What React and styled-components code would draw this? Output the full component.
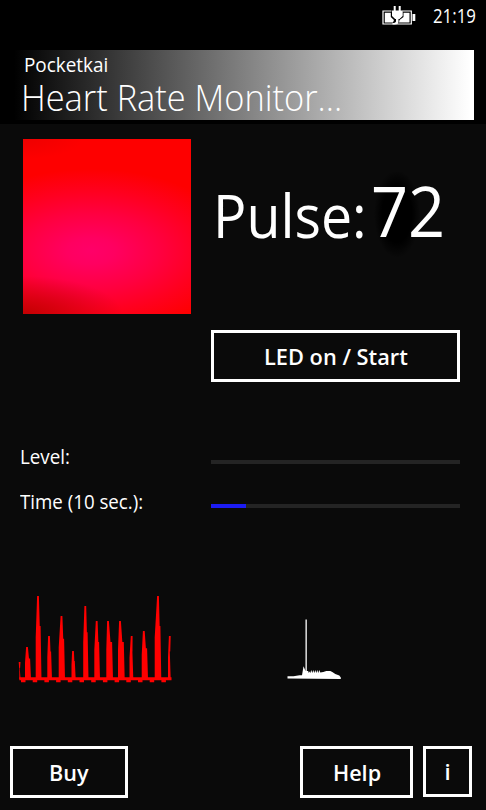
import styled, { createGlobalStyle } from "styled-components";

const GlobalStyle = createGlobalStyle`
  * {
    box-sizing: border-box;
  }

  body {
    margin: 0;
    background: #0a0a0a;
    color: #fff;
    font-family: "Open Sans", "Noto Sans", sans-serif;
  }
`;

const Phone = styled.div`
  display: flex;
  flex-direction: column;
  width: 486px;
  height: 810px;
  overflow: hidden;
  background: #0a0a0a;
`;

const Top = styled.header`
  height: 124px;
  background: #000;
`;

const StatusBar = styled.div`
  display: flex;
  justify-content: flex-end;
  height: 49.5px;
  padding: 0 10px 0 0;
`;

const BatteryIcon = styled.svg`
  width: 34px;
  height: 22px;
  margin: 5px 17px 0 0;
`;

/* text squeezed sideways to get the narrow phone lettering */
const Text = styled.span`
  display: block;
  width: ${({ $width }) => $width}px;
  font-size: ${({ $size }) => $size}px;
  font-weight: ${({ $weight }) => $weight || 400};
  line-height: ${({ $line }) => $line}px;
  white-space: nowrap;
  transform: scaleX(${({ $squeeze }) => $squeeze || 1});
  transform-origin: left;
`;

const Banner = styled.div`
  height: 70px;
  margin-right: 12px;
  padding-top: 1.5px;
  background: linear-gradient(to right, #000 14px, #808080 243px, #fff 470px);
`;

const BannerLine = styled.div`
  padding-left: ${({ $left }) => $left}px;
`;

const Reading = styled.section`
  display: flex;
  height: 190px;
  padding: 14.5px 0 0 23px;
`;

const Camera = styled.div`
  width: 167.5px;
  height: 175px;
  background:
    radial-gradient(ellipse 100px 38px at 0 100%, #b40000cc, #e0000000),
    radial-gradient(ellipse 60px 20px at 0 0, #d0000055, #e0000000),
    radial-gradient(
      ellipse 150px 82px at 68px 112px,
      #ff0068 0%,
      #ff0060 16%,
      #ff0040 46%,
      #ff0020 72%,
      #fe0000 100%
    );
`;

const Pulse = styled.div`
  display: flex;
  margin-left: 22.5px;
  padding-top: 32.5px;
`;

const PulseValue = styled.div`
  height: 88px;
  margin-top: 1px;
  padding-left: 1px;
  background: radial-gradient(ellipse 23px 44px at 27px 42px, #000 65%, #00000000);
`;

const StartRow = styled.div`
  display: flex;
  height: 128px;
  padding: 16px 0 0 211px;
`;

const Button = styled.button`
  display: flex;
  justify-content: center;
  width: ${({ $width }) => $width}px;
  height: ${({ $height }) => $height || 52}px;
  padding: 0;
  border: 3px solid #fff;
  background: transparent;
  color: #fff;
  font-family: inherit;
`;

const Meter = styled.div`
  display: grid;
  grid-template-columns: 191px 249px;
  height: 44.5px;
  padding-left: 20px;
`;

const Track = styled.div`
  height: 4px;
  margin-top: 17.5px;
  background: #242424;
`;

const Fill = styled.div`
  height: 100%;
  background: #1c1cf4;
`;

const Charts = styled.section`
  display: flex;
  align-items: flex-start;
  height: 215px;
  padding: 54px 0 0 10px;
`;

const Chart = styled.svg`
  width: ${({ $width }) => $width}px;
  height: 110px;
  margin-right: 85px;
`;

const Footer = styled.footer`
  display: flex;
  gap: 10px;
  padding: 0 14px 0 10px;
`;

const Spacer = styled.div`
  flex: 1;
`;

const meters = [
  { label: "Level:", width: 51, squeeze: 0.94, value: 0 },
  { label: "Time (10 sec.):", width: 125, squeeze: 0.935, value: 14 },
];

/* [left, peak, right, top] of every beat */
const beats = [
  [19.3, 19.6, 20.6, 662],
  [25, 27, 31, 647],
  [35.7, 38, 41.5, 596],
  [47.3, 49, 52, 636],
  [58.7, 61.5, 65, 616],
  [71.5, 73, 75.7, 651],
  [83.2, 85.3, 88.5, 606],
  [94.3, 96.7, 100, 621],
  [106.3, 108, 113, 621],
  [118, 120, 124.7, 621],
  [129.5, 131.7, 133.3, 636],
  [141.7, 143.8, 148, 631],
  [154.7, 158, 161.3, 596],
  [168, 169.8, 170.7, 636],
];

const beatPath = ([left, peak, right, top]) => {
  const base = 679;
  const shoulder = top + (base - top) * 0.36;
  return `M${left} ${base}V${(top + base) / 2}L${peak - 0.9} ${top}H${
    peak + 0.9
  }L${(peak + right) / 2} ${shoulder}H${right - 0.9}L${right} ${base}Z`;
};

function App() {
  return (
    <>
      <GlobalStyle />
      <Phone>
        <Top>
          <StatusBar>
            <BatteryIcon viewBox="0 0 34 22">
              <path
                d="M9.500 6H1v13h28.300V6H20.500"
                fill="none"
                stroke="#fff"
                strokeWidth="1.2"
              />
              <path
                d="M2.800 7.800h6v4.200l3.200 3-1 2.400H2.800zM21.500 7.800h6v9.600H17l.5-2.400 4-3zM30.500 9h2.800v7h-2.800z"
                fill="#fff"
              />
              <path
                d="M11.700 1h2v4.500h3V1h2v4.500h2v5.500l-3.200 3h-1v3q0 2.500-4 2.500h-2v-1.500q3.500 0 3.500-2V14h-.8L10 11V5.500h1.700z"
                fill="#fff"
              />
            </BatteryIcon>
            <Text $size={20.5} $line={30} $width={43} $squeeze={0.82}>
              21:19
            </Text>
          </StatusBar>
          <Banner>
            <BannerLine $left={24}>
              <Text $size={20} $line={27} $squeeze={0.945}>
                Pocketkai
              </Text>
            </BannerLine>
            <BannerLine $left={21}>
              <Text $size={36} $line={40} $weight={330} $squeeze={0.955}>
                Heart Rate Monitor...
              </Text>
            </BannerLine>
          </Banner>
        </Top>
        <Reading>
          <Camera />
          <Pulse>
            <Text $size={60} $line={88} $width={157} $squeeze={0.925}>
              Pulse:
            </Text>
            <PulseValue>
              <Text $size={69} $line={76} $width={80} $weight={430} $squeeze={0.94}>
                72
              </Text>
            </PulseValue>
          </Pulse>
        </Reading>
        <StartRow>
          <Button $width={249}>
            <Text $size={22} $line={46} $weight={600} $width={144} $squeeze={0.99}>
              LED on / Start
            </Text>
          </Button>
        </StartRow>
        {meters.map(({ label, width, squeeze, value }) => (
          <Meter key={label}>
            <Text $size={20} $line={30} $width={width} $squeeze={squeeze}>
              {label}
            </Text>
            <Track>
              <Fill style={{ width: `${value}%` }} />
            </Track>
          </Meter>
        ))}
        <Charts>
          <Chart $width={180} viewBox="10 585 180 110">
            {beats.map((beat) => (
              <path key={beat[0]} d={beatPath(beat)} fill="#f00" />
            ))}
            <path d="M19.300 678.800H171.500" stroke="#f00" strokeWidth="3" />
            <path
              d="M21 681H171"
              stroke="#f00"
              strokeWidth="2.500"
              strokeDasharray="4.500 7.200"
            />
          </Chart>
          <Chart $width={80} viewBox="275 585 80 110">
            <path
              d="M287.500 678.500v-2.300h6l6-1h2.500l1.500-9 1.300 3 .7 2V619.500h1.300V671h1.500v2l1-1.500 1 1.500 1-3 1 3 1-3 1 3 1-3 1 3 1-3 1 3 1-3 1 2.500 3-.5 3-1h4l2 1 3 2 4 1.500 1.500 2v1.500z"
              fill="#fff"
            />
          </Chart>
        </Charts>
        <Footer>
          <Button $width={118}>
            <Text $size={22} $line={46} $weight={600} $width={40} $squeeze={0.98}>
              Buy
            </Text>
          </Button>
          <Spacer />
          <Button $width={113}>
            <Text $size={22} $line={46} $weight={600} $width={48} $squeeze={0.98}>
              Help
            </Text>
          </Button>
          <Button $width={49} $height={51}>
            <Text $size={22} $line={44} $weight={600} $width={7}>
              i
            </Text>
          </Button>
        </Footer>
      </Phone>
    </>
  );
}

export default App;
